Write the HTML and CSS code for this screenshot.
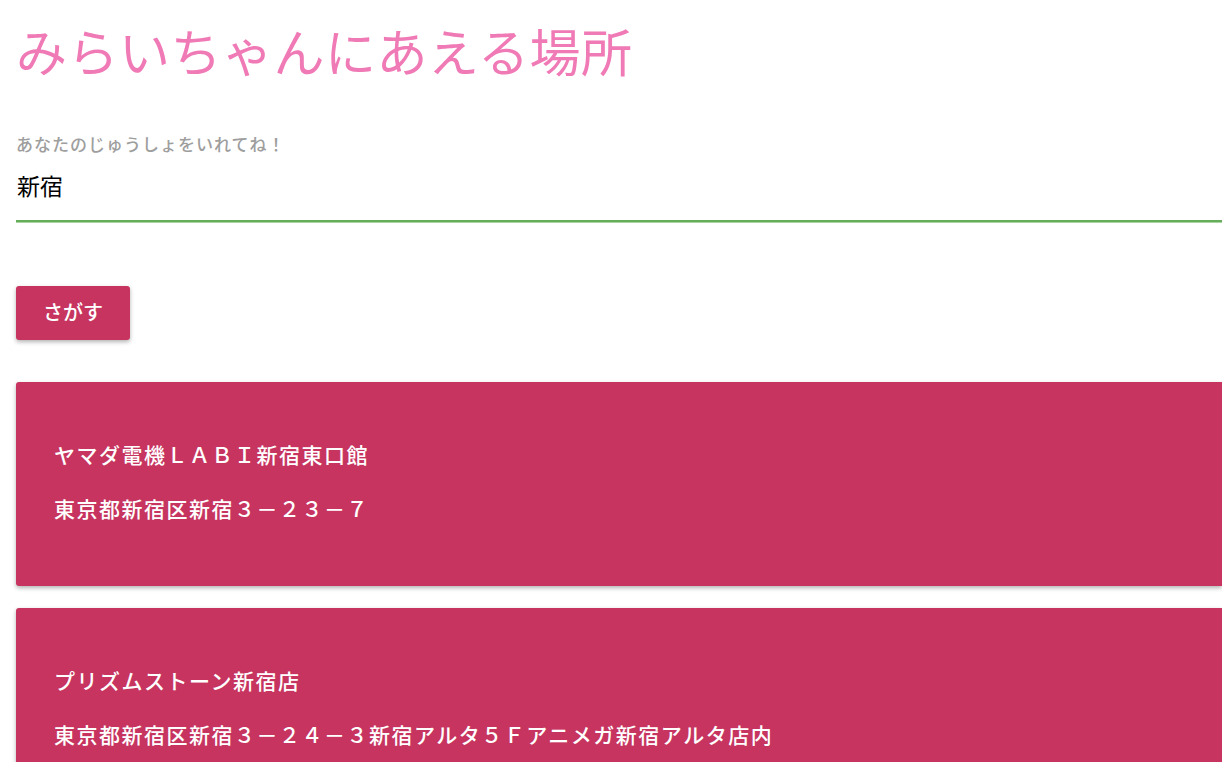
FILE: index.html
```html
<!DOCTYPE html>
<html lang="ja">
<head>
  <meta charset="UTF-8">
  <title>みらいちゃんにあえる場所</title>
  <link rel="stylesheet" href="styles.css">
</head>
<body>
  <h1>みらいちゃんにあえる場所</h1>

  <div class="field">
    <label for="address">あなたのじゅうしょをいれてね！</label>
    <input type="text" id="address" value="新宿">
  </div>

  <button class="search">さがす</button>

  <div class="results">
    <div class="card">
      <p>ヤマダ電機ＬＡＢＩ新宿東口館</p>
      <p>東京都新宿区新宿３－２３－７</p>
    </div>
    <div class="card">
      <p>プリズムストーン新宿店</p>
      <p>東京都新宿区新宿３－２４－３新宿アルタ５Ｆアニメガ新宿アルタ店内</p>
    </div>
  </div>
</body>
</html>
```

FILE: styles.css
```css
body {
  font-family: "Noto Sans CJK JP", sans-serif;
  margin: 0;
  padding: 0 0 0 16px;
  background: #fff;
  overflow: hidden;
}

h1 {
  margin: 20px 0 0;
  font-size: 51px;
  line-height: 60px;
  font-weight: 400;
  color: #f07ab6;
  letter-spacing: 0.5px;
}

.field {
  margin-top: 54px;
}

.field label {
  display: block;
  font-size: 17px;
  line-height: 20px;
  color: #9e9e9e;
  font-weight: 500;
  letter-spacing: 1px;
}

.field input {
  display: block;
  width: 100%;
  box-sizing: border-box;
  margin-top: 16px;
  padding: 0 0 20px 1px;
  border: none;
  border-bottom: 2px solid #66ad5b;
  box-shadow: 0 1px 0 #a9d5a0;
  font-family: inherit;
  font-size: 23px;
  line-height: 30px;
  color: #000;
  outline: none;
  background: transparent;
}

.search {
  display: block;
  margin-top: 64px;
  width: 114px;
  height: 54px;
  padding: 0 0 4px;
  border: none;
  border-radius: 3px;
  background: #c6345f;
  color: #fff;
  font-family: inherit;
  font-size: 20px;
  font-weight: 500;
  box-shadow: 0 2px 4px rgba(0,0,0,0.3);
  cursor: pointer;
}

.results {
  margin-top: 42px;
  display: flex;
  flex-direction: column;
  gap: 22px;
}

.card {
  background: #c6345f;
  color: #fff;
  border-radius: 3px 0 0 3px;
  padding: 56px 38px 62px;
  display: flex;
  flex-direction: column;
  gap: 22px;
  box-shadow: 0 2px 4px rgba(0,0,0,0.3);
}

.card p {
  margin: 0;
  font-size: 21px;
  line-height: 32px;
  font-weight: 500;
  letter-spacing: 1.5px;
}
```
